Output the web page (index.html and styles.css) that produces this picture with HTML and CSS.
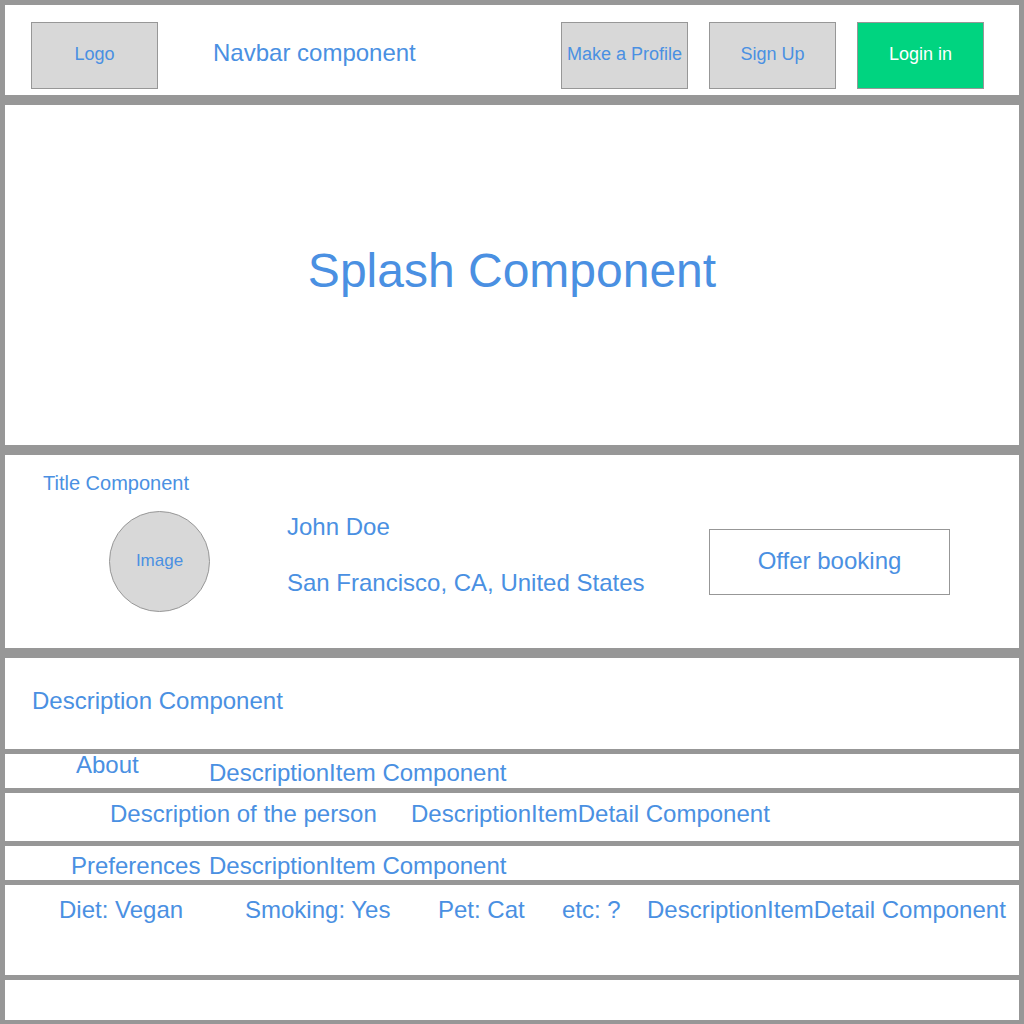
FILE: index.html
```html
<!DOCTYPE html>
<html lang="en">
<head>
<meta charset="utf-8">
<title>Profile wireframe</title>
<link rel="stylesheet" href="styles.css">
</head>
<body>
<div class="page">
  <header class="panel navbar gap-lg">
    <div class="box logo">Logo</div>
    <div class="nav-title">Navbar component</div>
    <nav class="nav-actions">
      <a class="box btn">Make a Profile</a>
      <a class="box btn">Sign Up</a>
      <a class="box btn btn-login">Login in</a>
    </nav>
  </header>

  <section class="panel splash gap-lg">
    <h1 class="splash-title">Splash Component</h1>
  </section>

  <section class="panel title-section gap-lg">
    <div class="title-label">Title Component</div>
    <div class="title-row">
      <div class="avatar">Image</div>
      <div class="person">
        <div class="person-name">John Doe</div>
        <div class="person-place">San Francisco, CA, United States</div>
      </div>
      <button class="offer">Offer booking</button>
    </div>
  </section>

  <section class="panel description gap-sm">
    <div class="txt">Description Component</div>
  </section>

  <div class="panel item-row about gap-sm">
    <div class="label about-label">About</div>
    <div class="txt item-note">DescriptionItem Component</div>
  </div>

  <div class="panel detail-row person-desc gap-sm">
    <div class="label desc-label">Description of the person</div>
    <div class="txt">DescriptionItemDetail Component</div>
  </div>

  <div class="panel item-row prefs gap-sm">
    <div class="label prefs-label">Preferences</div>
    <div class="txt">DescriptionItem Component</div>
  </div>

  <div class="panel pref-detail gap-sm">
    <div class="txt pref-1">Diet: Vegan</div>
    <div class="txt pref-2">Smoking: Yes</div>
    <div class="txt pref-3">Pet: Cat</div>
    <div class="txt pref-4">etc: ?</div>
    <div class="txt">DescriptionItemDetail Component</div>
  </div>

  <div class="panel footer-row"></div>
</div>
</body>
</html>
```

FILE: styles.css
```css
* { box-sizing: border-box; }

html, body {
  margin: 0;
  padding: 0;
}

body {
  background: #979797;
  font-family: "Liberation Sans", Arial, Helvetica, sans-serif;
  color: #4a90e2;
  width: 1024px;
  height: 1024px;
  overflow: hidden;
}

.page {
  display: flex;
  flex-direction: column;
  padding: 5px 5px 4px 5px;
}

.panel {
  background: #ffffff;
  flex: none;
}

.gap-lg { margin-bottom: 10px; }
.gap-sm { margin-bottom: 5px; }

.txt, .label {
  font-size: 24px;
  line-height: 24px;
  white-space: nowrap;
}

/* Navbar */
.navbar {
  height: 90px;
  display: flex;
  align-items: flex-start;
  padding: 17px 35px 0 26px;
}

.box {
  width: 127px;
  height: 67px;
  background: #d8d8d8;
  border: 1px solid #979797;
  display: flex;
  align-items: center;
  justify-content: center;
  font-size: 18px;
  padding-bottom: 3px;
  white-space: nowrap;
  color: #4a90e2;
  text-decoration: none;
}

.nav-title {
  margin-left: 55px;
  margin-top: 19px;
  font-size: 24px;
  line-height: 24px;
  white-space: nowrap;
}

.nav-actions {
  margin-left: auto;
  display: flex;
  gap: 21px;
}

.btn-login {
  background: #00d480;
  color: #ffffff;
}

/* Splash */
.splash {
  height: 340px;
  display: flex;
  align-items: center;
  justify-content: center;
}

.splash-title {
  margin: 0 0 8px 0;
  font-size: 48px;
  line-height: 56px;
  font-weight: normal;
  white-space: nowrap;
}

/* Title */
.title-section {
  height: 193px;
  padding: 18px 0 0 38px;
}

.title-label {
  font-size: 20px;
  line-height: 20px;
  white-space: nowrap;
}

.title-row {
  display: flex;
  align-items: flex-start;
  margin-top: 18px;
}

.avatar {
  width: 101px;
  height: 101px;
  margin-left: 66px;
  border-radius: 50%;
  background: #d8d8d8;
  border: 1px solid #979797;
  display: flex;
  align-items: center;
  justify-content: center;
  font-size: 17px;
  padding-bottom: 2px;
}

.person {
  margin-left: 77px;
  padding-top: 4px;
  display: flex;
  flex-direction: column;
  gap: 32px;
}

.person-name, .person-place {
  font-size: 24px;
  line-height: 24px;
  white-space: nowrap;
}

.offer {
  margin-left: auto;
  margin-right: 69px;
  margin-top: 18px;
  width: 241px;
  height: 66px;
  background: #ffffff;
  border: 1px solid #979797;
  font-family: inherit;
  font-size: 24px;
  color: #4a90e2;
  padding: 0 0 2px 0;
}

/* Description */
.description {
  height: 91px;
  padding: 31px 0 0 27px;
}

.item-row, .detail-row, .pref-detail {
  display: flex;
  align-items: flex-start;
}

.about {
  height: 34px;
}

.about-label {
  width: 204px;
  padding-left: 71px;
  margin-top: -1px;
}

.item-note {
  margin-top: 7px;
}

.person-desc {
  height: 48px;
  padding-top: 9px;
}

.desc-label {
  width: 406px;
  padding-left: 105px;
}

.prefs {
  height: 34px;
  padding-top: 8px;
}

.prefs-label {
  width: 204px;
  padding-left: 66px;
}

.pref-detail {
  height: 90px;
  padding-top: 13px;
}

.pref-1 { width: 240px; padding-left: 54px; }
.pref-2 { width: 193px; }
.pref-3 { width: 124px; }
.pref-4 { width: 85px; }

.footer-row {
  height: 40px;
}
```
